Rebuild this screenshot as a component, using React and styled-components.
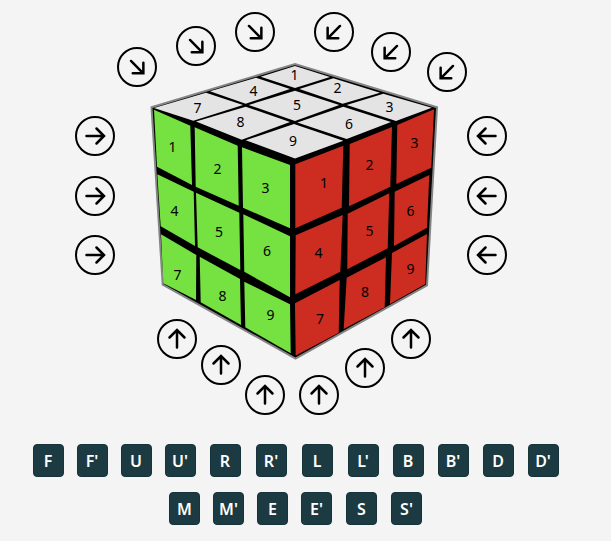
import React from 'react';
import styled, { createGlobalStyle } from 'styled-components';

const GlobalStyle = createGlobalStyle`
  body {
    margin: 0;
    background-color: #f4f4f4;
    font-family: 'Noto Sans', 'Open Sans', sans-serif;
  }
`;

const Page = styled.main`
  display: flex;
  flex-direction: column;
  align-items: center;
  gap: 29px;
  padding: 12px 20px 16px 0;
`;

const Stage = styled.section`
  position: relative;
  width: 442px;
`;

const CubeDrawing = styled.svg`
  display: block;
  width: 100%;
`;

const Outline = styled.polygon`
  fill: #000;
  stroke: #858585;
  stroke-width: 2;
`;

const Sticker = styled.polygon`
  fill: ${({ $color }) => $color};
`;

const StickerLabel = styled.text`
  font-size: 14px;
  text-anchor: middle;
  fill: #000;
`;

const ArrowButton = styled.button`
  position: absolute;
  left: ${({ $x }) => $x}px;
  top: ${({ $y }) => $y}px;
  display: flex;
  align-items: center;
  justify-content: center;
  width: 40px;
  height: 40px;
  padding: 0;
  background: none;
  border: 2px solid #000;
  border-radius: 50%;
  cursor: pointer;
  &:hover {
    background-color: #ddd;
  }
`;

const ArrowIcon = styled.svg`
  width: 24px;
  height: 24px;
  fill: none;
  stroke: #000;
  stroke-width: 2.5;
  stroke-linecap: round;
  stroke-linejoin: miter;
`;

const Moves = styled.section`
  display: flex;
  flex-direction: column;
  align-items: center;
  gap: 15px;
`;

const MoveRow = styled.div`
  display: flex;
  gap: 14px;
`;

const MoveGroup = styled.div`
  display: flex;
  gap: ${({ $gap }) => $gap}px;
`;

const MoveButton = styled.button`
  width: 31px;
  height: 33px;
  padding: 0;
  background-color: #1c3a41;
  color: white;
  border: 1px solid #17333a;
  border-radius: 4px;
  font-family: inherit;
  font-size: 16px;
  font-weight: 600;
  line-height: 24px;
  cursor: pointer;
  &:hover {
    background-color: #2b525a;
  }
`;

// each sticker: corner points, then the centre of its number
const faces = [
  {
    name: 'up',
    color: '#e4e4e4',
    stickers: [
      ['260.7,76.7 295,66 330,77 295,88', 294.5, 75],
      ['299.3,89 333.3,78.3 380,92.7 342.7,103.7', 337.5, 88],
      ['346.7,105 383.3,93.7 431.7,107.7 396,121', 389.5, 107],
      ['210,91.3 256,77.7 290,89 245.7,103.7', 253.5, 91],
      ['248.7,105 295,90.7 339.3,105 295,121', 297, 105],
      ['297.3,122.5 343.3,106.7 391,122 346.7,139', 349, 124],
      ['154,108 206,92.7 243,105 193.3,120.7', 197.5, 108],
      ['196,121.5 245.7,106.7 290,122 241.7,139.7', 240.5, 122],
      ['245.7,140.3 294,124 343.3,140.7 295,158.5', 293, 141]
    ]
  },
  {
    name: 'front',
    color: '#75e242',
    stickers: [
      ['154,109.7 190.3,125.7 192,185 157,166.7', 172.5, 147],
      ['194.7,127.3 237.7,145.7 238.7,205.7 195.7,186.7', 217.5, 169],
      ['242,147.3 290,165 290,228.3 243,207.7', 265.5, 188],
      ['157.3,174.3 193.7,191.7 195,246 160.7,226.3', 174.5, 211],
      ['196,192.7 239.3,212.7 240.3,270 197.7,247.3', 219, 232],
      ['243.3,214.3 290,236.3 290,297.3 244.3,271.7', 267, 251],
      ['161,234.3 196.3,255 196,300 163.3,283.3', 177.5, 275],
      ['199.7,256.7 240,279 241,325 200.7,302.3', 222.5, 296],
      ['244.3,281.7 290,304.3 290.7,353.3 245.3,327.3', 270.5, 315]
    ]
  },
  {
    name: 'right',
    color: '#cc2d20',
    stickers: [
      ['295.3,164.3 343.3,145.7 341.7,207.7 295.3,228.3', 324, 183],
      ['349.7,144 392,127 390.3,186.7 349,206.3', 369.5, 165],
      ['397.3,125 434,109.3 431.3,167.7 396.3,184', 414.5, 143],
      ['295.7,235.3 342.7,215 340.3,271.7 295.3,294.3', 318.5, 253],
      ['347.7,213.7 389.3,193.3 387.7,248.3 347.3,269.3', 369.5, 231],
      ['394.7,191.7 429.3,175 427,227.7 394,246', 410.5, 211],
      ['295,303.3 339.7,280 338.7,332.7 295.7,355.5', 320, 319],
      ['346.7,277.7 386,257.3 384.7,307.3 343.7,329', 365, 292],
      ['392,253 427,234 425.3,284 390,304', 410.5, 269]
    ]
  }
];

const arrows = [
  { label: 'Left slice down', x: 42, y: 35, angle: 45 },
  { label: 'Middle slice down', x: 101, y: 14, angle: 45 },
  { label: 'Right slice down', x: 160, y: 0, angle: 45 },
  { label: 'Front slice down', x: 352, y: 40, angle: 135 },
  { label: 'Standing slice down', x: 296, y: 20, angle: 135 },
  { label: 'Back slice down', x: 239, y: 0, angle: 135 },
  { label: 'Top row right', x: 0, y: 104, angle: 0 },
  { label: 'Middle row right', x: 0, y: 164, angle: 0 },
  { label: 'Bottom row right', x: 0, y: 223, angle: 0 },
  { label: 'Top row left', x: 392, y: 104, angle: 180 },
  { label: 'Middle row left', x: 392, y: 164, angle: 180 },
  { label: 'Bottom row left', x: 392, y: 223, angle: 180 },
  { label: 'Left slice up', x: 82, y: 307, angle: 270 },
  { label: 'Middle slice up', x: 126, y: 333, angle: 270 },
  { label: 'Right slice up', x: 170, y: 363, angle: 270 },
  { label: 'Front slice up', x: 224, y: 363, angle: 270 },
  { label: 'Standing slice up', x: 270, y: 336, angle: 270 },
  { label: 'Back slice up', x: 316, y: 307, angle: 270 }
];

const moveRows = [
  [
    { gap: 13, moves: ['F', "F'", 'U', "U'"] },
    { gap: 15, moves: ['R', "R'", 'L', "L'"] },
    { gap: 14, moves: ['B', "B'", 'D', "D'"] }
  ],
  [
    { gap: 13, moves: ['M', "M'", 'E', "E'"] },
    { gap: 14, moves: ['S', "S'"] }
  ]
];

const Cube = () => (
  <CubeDrawing viewBox="75 12 442 403">
    <Outline points="151.5,107.3 295,64 437,107.3 427,285.3 295.5,358.5 162.7,284.7" />
    {faces.map(face => (
      <g key={face.name}>
        {face.stickers.map(([points, x, y], i) => (
          <g key={points}>
            <Sticker points={points} $color={face.color} />
            <StickerLabel x={x} y={y + 5}>{i + 1}</StickerLabel>
          </g>
        ))}
      </g>
    ))}
  </CubeDrawing>
);

const Arrow = ({ label, x, y, angle }) => (
  <ArrowButton type="button" aria-label={label} $x={x} $y={y}>
    <ArrowIcon viewBox="-12 -12 24 24">
      <path d="M-8.5 0H8.5M1.5 -7.5L9 0L1.5 7.5" transform={`rotate(${angle})`} />
    </ArrowIcon>
  </ArrowButton>
);

const App = () => {
  return (
    <>
      <GlobalStyle />
      <Page>
        <Stage>
          <Cube />
          {arrows.map(arrow => (
            <Arrow key={arrow.label} {...arrow} />
          ))}
        </Stage>
        <Moves>
          {moveRows.map((groups, i) => (
            <MoveRow key={i}>
              {groups.map(group => (
                <MoveGroup key={group.moves[0]} $gap={group.gap}>
                  {group.moves.map(move => (
                    <MoveButton key={move} type="button">{move}</MoveButton>
                  ))}
                </MoveGroup>
              ))}
            </MoveRow>
          ))}
        </Moves>
      </Page>
    </>
  );
};

export default App;
